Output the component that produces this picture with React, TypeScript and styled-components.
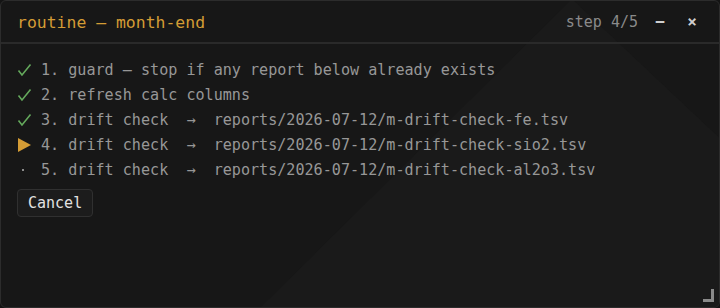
import React from "react";
import styled, { createGlobalStyle } from "styled-components";

const Global = createGlobalStyle`
  html, body { margin: 0; padding: 0; background: #141414; }
  body { width: 720px; height: 308px; overflow: hidden; }
  #root { width: 720px; height: 308px; }
`;

const Window = styled.div`
  position: relative;
  box-sizing: border-box;
  width: 720px;
  height: 308px;
  background: #171717;
  border: 1px solid #2c2c2c;
  border-radius: 6px;
  overflow: hidden;
  font-family: "DejaVu Sans Mono", "Liberation Mono", monospace;
  display: flex;
  flex-direction: column;
`;

const Backdrop = styled.svg`
  position: absolute;
  inset: 0;
  pointer-events: none;
`;

const Header = styled.header`
  position: relative;
  box-sizing: border-box;
  height: 43px;
  flex: none;
  display: flex;
  align-items: center;
  padding: 0 11px 0 16px;
  border-bottom: 2px solid #2a2a2a;
`;

const Title = styled.h1`
  margin: 0;
  flex: 1;
  font-size: 16.45px;
  font-weight: normal;
  color: #d49c35;
  padding-top: 1px;
`;

const Step = styled.span`
  font-size: 15px;
  color: #8a8a8a;
  margin-right: 6px;
`;

const HeaderButton = styled.span`
  font-size: 16px;
  color: #cfcfcf;
  width: 32px;
  text-align: center;
  font-weight: bold;
`;

const Body = styled.main`
  position: relative;
  padding: 14px 16px 0 16px;
  display: flex;
  flex-direction: column;
  align-items: flex-start;
`;

const Steps = styled.ol`
  list-style: none;
  margin: 0;
  padding: 0;
`;

const Row = styled.li`
  display: flex;
  align-items: center;
  height: 24.8px;
  font-size: 15.1px;
  color: #979797;
  white-space: pre;
`;

const Icon = styled.span<{ $kind: "done" | "active" | "pending" }>`
  width: 24px;
  flex: none;
  display: flex;
  align-items: center;
  padding-left: ${(p) => (p.$kind === "pending" ? "4px" : "0")};
  box-sizing: border-box;
  color: ${(p) =>
    p.$kind === "done" ? "#64a85c" : p.$kind === "active" ? "#d49c35" : "#8c8c8c"};
`;

const Cancel = styled.button`
  margin-top: 7px;
  height: 28px;
  padding: 0 10px;
  background: #1c1c1c;
  border: 1px solid #303030;
  border-radius: 4px;
  color: #e2e2e2;
  font-family: "DejaVu Sans Mono", "Liberation Mono", monospace;
  font-size: 15px;
`;

const Grip = styled.div`
  position: absolute;
  right: 5px;
  bottom: 5px;
  width: 11px;
  height: 13px;
  border-right: 3px solid #8a8a8a;
  border-bottom: 3px solid #8a8a8a;
  box-sizing: border-box;
`;

const Check = () => (
  <svg width="15" height="14" viewBox="0 0 15 14">
    <path d="M1.5 7.5 L5 12 L13.5 1.5" fill="none" stroke="currentColor" strokeWidth="1.6" />
  </svg>
);

const Play = () => (
  <svg width="15" height="16" viewBox="0 0 15 16">
    <path d="M1 1 L14 8 L1 15 Z" fill="currentColor" />
  </svg>
);

const Dot = () => (
  <svg width="4" height="4" viewBox="0 0 4 4">
    <rect x="1" y="1" width="2" height="2" fill="currentColor" />
  </svg>
);

type Kind = "done" | "active" | "pending";
const steps: { kind: Kind; text: string }[] = [
  { kind: "done", text: "1. guard — stop if any report below already exists" },
  { kind: "done", text: "2. refresh calc columns" },
  { kind: "done", text: "3. drift check  →  reports/2026-07-12/m-drift-check-fe.tsv" },
  { kind: "active", text: "4. drift check  →  reports/2026-07-12/m-drift-check-sio2.tsv" },
  { kind: "pending", text: "5. drift check  →  reports/2026-07-12/m-drift-check-al2o3.tsv" },
];

export default function App() {
  return (
    <>
      <Global />
      <Window>
        <Backdrop width="720" height="308" viewBox="0 0 720 308">
          <path d="M571 -2 L258 308 L900 308 Z" fill="#1a1a1a" />
        </Backdrop>
        <Header>
          <Title>routine — month-end</Title>
          <Step>step 4/5</Step>
          <HeaderButton>−</HeaderButton>
          <HeaderButton>×</HeaderButton>
        </Header>
        <Body>
          <Steps>
            {steps.map((s) => (
              <Row key={s.text}>
                <Icon $kind={s.kind}>
                  {s.kind === "done" ? <Check /> : s.kind === "active" ? <Play /> : <Dot />}
                </Icon>
                {s.text}
              </Row>
            ))}
          </Steps>
          <Cancel>Cancel</Cancel>
        </Body>
        <Grip />
      </Window>
    </>
  );
}
